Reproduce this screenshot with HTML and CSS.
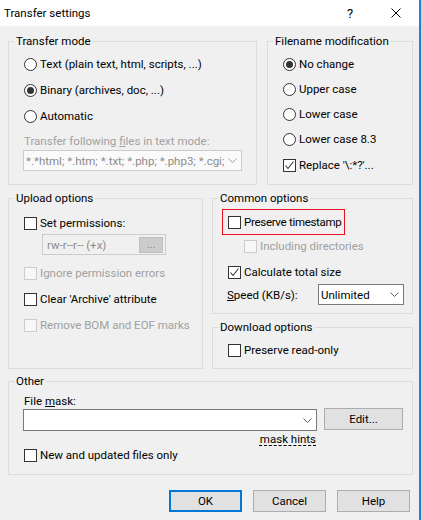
FILE: index.html
```html
<!DOCTYPE html>
<html>
<head>
<meta charset="utf-8">
<title>Transfer settings</title>
<link rel="stylesheet" href="styles.css">
</head>
<body>
<div class="window">
  <header class="titlebar">
    <span class="title">Transfer settings</span>
    <span class="cap-btn">?</span>
    <span class="cap-btn"><svg width="10" height="10" viewBox="0 0 10 10"><path d="M0.5 0.5L9.5 9.5M9.5 0.5L0.5 9.5" stroke="#000" stroke-width="1"/></svg></span>
  </header>
  <main class="content">
    <div class="row row-top">
      <fieldset class="group transfer">
        <legend>Transfer mode</legend>
        <div class="gbody transfer-body">
          <div class="opt"><span class="radio"></span><span>Text (plain text, html, scripts, ...)</span></div>
          <div class="opt gap10"><span class="radio on"></span><span>Binary (archives, doc, ...)</span></div>
          <div class="opt gap10"><span class="radio"></span><span>Automatic</span></div>
          <div class="dis-label">Transfer following <u>f</u>iles in text mode:</div>
          <div class="combo combo-dis"><span class="combo-text">*.*html; *.htm; *.txt; *.php; *.php3; *.cgi; *.c; *.cpp</span><span class="chev"><svg width="9" height="5" viewBox="0 0 9 5"><polyline points="0.5,0.5 4.5,4.5 8.5,0.5" fill="none" stroke="#a0a0a0"/></svg></span></div>
        </div>
      </fieldset>
      <fieldset class="group filename">
        <legend>Filename modification</legend>
        <div class="gbody filename-body">
          <div class="opt"><span class="radio on"></span><span>No change</span></div>
          <div class="opt gap9"><span class="radio"></span><span>Upper case</span></div>
          <div class="opt gap9"><span class="radio"></span><span>Lower case</span></div>
          <div class="opt gap9"><span class="radio"></span><span>Lower case 8.3</span></div>
          <div class="opt gap10"><span class="box"><svg width="11" height="11" viewBox="0 0 11 11"><polyline points="1.5,5.5 4,8.5 9.5,1.5" fill="none" stroke="#333" stroke-width="1.1"/></svg></span><span>Replace '\:*?'...</span></div>
        </div>
      </fieldset>
    </div>

    <div class="row row-mid">
      <fieldset class="group upload">
        <legend>Upload options</legend>
        <div class="gbody upload-body">
          <div class="opt"><span class="box"></span><span>Set permissions:</span></div>
          <div class="perm"><span class="perm-text">rw-r--r-- (+x)</span><span class="perm-btn">...</span></div>
          <div class="opt gap10 disabled"><span class="box"></span><span>Ignore permission errors</span></div>
          <div class="opt gap10"><span class="box"></span><span>Clear 'Archive' attribute</span></div>
          <div class="opt gap10 disabled"><span class="box"></span><span>Remove BOM and EOF marks</span></div>
        </div>
      </fieldset>
      <div class="col-right">
        <fieldset class="group common">
          <legend>Common options</legend>
          <div class="gbody common-body">
            <div class="highlight"><div class="opt"><span class="box"></span><span class="tight">Preserve timestamp</span></div></div>
            <div class="opt indent disabled"><span class="box"></span><span>Including directories</span></div>
            <div class="opt gap10"><span class="box"><svg width="11" height="11" viewBox="0 0 11 11"><polyline points="1.5,5.5 4,8.5 9.5,1.5" fill="none" stroke="#333" stroke-width="1.1"/></svg></span><span>Calculate total size</span></div>
            <div class="speed-row">
              <span class="speed-label"><u>S</u>peed (KB/s):</span>
              <div class="combo speed-combo"><span class="combo-text">Unlimited</span><span class="chev"><svg width="9" height="5" viewBox="0 0 9 5"><polyline points="0.5,0.5 4.5,4.5 8.5,0.5" fill="none" stroke="#606060"/></svg></span></div>
            </div>
          </div>
        </fieldset>
        <fieldset class="group download">
          <legend>Download options</legend>
          <div class="gbody download-body">
            <div class="opt"><span class="box"></span><span>Preserve read-only</span></div>
          </div>
        </fieldset>
      </div>
    </div>

    <fieldset class="group other">
      <legend>Other</legend>
      <div class="gbody other-body">
        <div class="field-label">File <u>m</u>ask:</div>
        <div class="mask-row">
          <div class="combo mask-combo"><span class="combo-text"></span><span class="chev"><svg width="9" height="5" viewBox="0 0 9 5"><polyline points="0.5,0.5 4.5,4.5 8.5,0.5" fill="none" stroke="#606060"/></svg></span></div>
          <button class="btn edit-btn" type="button">Edit...</button>
        </div>
        <div class="hints"><span class="hint-link">mask hints</span></div>
        <div class="opt"><span class="box"></span><span>New and updated files only</span></div>
      </div>
    </fieldset>

    <div class="buttons">
      <button class="btn default" type="button">OK</button>
      <button class="btn" type="button">Cancel</button>
      <button class="btn" type="button">Help</button>
    </div>
  </main>
</div>
</body>
</html>
```

FILE: styles.css
```css
* { box-sizing: border-box; }
html, body { margin: 0; padding: 0; }
body {
  width: 421px;
  height: 520px;
  overflow: hidden;
  background: #f0f0f0;
  font-family: Roboto, "Noto Sans", sans-serif;
  font-size: 11.5px;
  color: #000;
}
.window {
  width: 421px;
  height: 520px;
  background: #f0f0f0;
  border-right: 2px solid #1883d7;
}
.titlebar {
  height: 26px;
  background: #fff;
  display: flex;
  align-items: center;
}
.title {
  flex: 1;
  padding-left: 4px;
  font-size: 11.5px;
}
.cap-btn {
  width: 46px;
  height: 26px;
  display: flex;
  align-items: center;
  justify-content: center;
  font-size: 13px;
}
.content {
  width: 413px;
  padding-left: 8px;
}
.row { display: flex; }
.row-top { margin-top: 7px; gap: 10px; }
.row-mid { margin-top: 5px; gap: 9px; }

.btn {
  font: inherit;
  color: #000;
  height: 22px;
  background: #e1e1e1;
  border: 1px solid #adadad;
  padding: 0;
  margin: 0;
}

.group {
  margin: 0;
  padding: 0;
  min-width: 0;
  border: 1px solid #dcdcdc;
}
.group legend {
  padding: 0 2px;
  margin-left: 5px;
  line-height: 16px;
}
.gbody { padding-left: 15px; }

.transfer { width: 249px; flex: none; }
.filename { width: 146px; flex: none; }
.upload { width: 195px; flex: none; }
.col-right { width: 201px; flex: none; display: flex; flex-direction: column; gap: 5px; }
.common, .download { width: 201px; }
.other { width: 405px; margin-top: 4px; }

.transfer-body { padding-top: 7px; padding-bottom: 13px; }
.filename-body { padding-top: 7px; }
.upload-body { padding-top: 9px; }
.common-body { padding-top: 3px; padding-bottom: 8px; }
.download-body { padding-top: 7px; padding-bottom: 10px; }
.other-body { padding-top: 5px; padding-bottom: 11px; }

.opt {
  display: flex;
  align-items: center;
  height: 16px;
  gap: 3px;
  white-space: nowrap;
}
.gap9 { margin-top: 9px; }
.gap10 { margin-top: 10px; }
.indent { margin-top: 3px; margin-left: 16px; }

.box {
  flex: none;
  width: 13px;
  height: 13px;
  border: 1px solid #333;
  background: #fff;
  display: flex;
  align-items: center;
  justify-content: center;
}
.radio {
  flex: none;
  width: 13px;
  height: 13px;
  border: 1px solid #333;
  border-radius: 50%;
  background: #fff;
  display: flex;
  align-items: center;
  justify-content: center;
}
.radio.on::after {
  content: "";
  width: 7px;
  height: 7px;
  border-radius: 50%;
  background: #333;
}
.disabled { color: #a0a0a0; }
.disabled .box { border-color: #cccccc; background: #f7f7f7; }

.dis-label {
  margin-top: 9px;
  line-height: 16px;
  color: #a0a0a0;
  white-space: nowrap;
}
u { text-decoration: underline; text-underline-offset: 1px; }

.combo {
  flex: none;
  display: flex;
  align-items: center;
  background: #fff;
  border: 1px solid #7a7a7a;
  overflow: hidden;
}
.combo-text {
  flex: 1;
  min-width: 0;
  overflow: hidden;
  white-space: nowrap;
  padding-left: 2px;
}
.chev {
  flex: none;
  width: 17px;
  display: flex;
  align-items: center;
  justify-content: center;
}
.combo-dis {
  margin-top: 1px;
  margin-left: -1px;
  width: 219px;
  height: 21px;
  background: #fafafa;
  border-color: #cccccc;
  color: #8c8c8c;
}

.perm {
  margin: 3px 0 0 18px;
  width: 124px;
  height: 21px;
  border: 1px solid #cccccc;
  background: #f0f0f0;
  display: flex;
  align-items: center;
  padding: 0 2px 0 4px;
  color: #8c8c8c;
}
.perm-text { flex: 1; white-space: nowrap; }
.perm-btn {
  width: 24px;
  height: 16px;
  background: #cccccc;
  border: 1px solid #bfbfbf;
  display: flex;
  align-items: center;
  justify-content: center;
  color: #8c8c8c;
  line-height: 1;
}

.highlight {
  margin-left: -6px;
  width: 123px;
  height: 26px;
  border: 1px solid #e81123;
  padding-left: 5px;
  display: flex;
  align-items: center;
}
.tight { letter-spacing: -0.3px; }
.speed-row {
  margin-top: 4px;
  display: flex;
  align-items: center;
  height: 21px;
}
.speed-label { width: 91px; margin-left: -1px; white-space: nowrap; flex: none; }
.speed-combo { width: 86px; height: 21px; }

.field-label { line-height: 15px; }
.mask-row { display: flex; align-items: flex-start; }
.mask-combo { margin-left: -1px; width: 294px; height: 22px; }
.mask-row .edit-btn { flex: none; margin-left: 7px; margin-top: -1px; width: 79px; }
.hints {
  width: 292px;
  text-align: right;
  line-height: 16px;
}
.hint-link {
  text-decoration: underline dashed;
  text-underline-offset: 2px;
}

.buttons {
  margin-top: 15px;
  display: flex;
  justify-content: flex-end;
  gap: 11px;
  padding-right: 3px;
}
.buttons .btn { width: 73px; flex: none; }
.buttons .btn.default { border: 2px solid #0078d7; }
```
